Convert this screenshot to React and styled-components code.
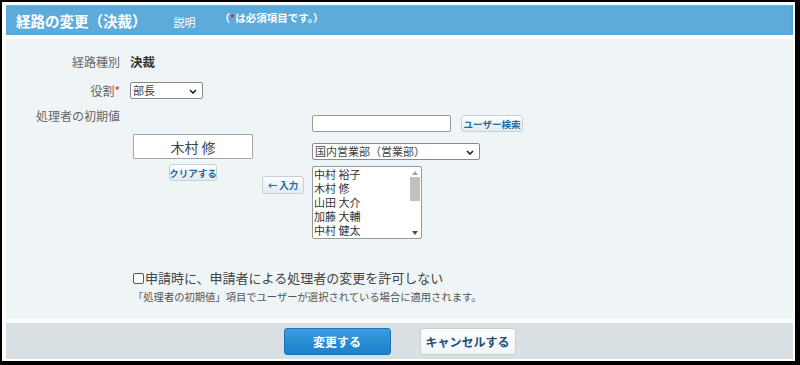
import React from 'react';
import styled, { createGlobalStyle } from 'styled-components';

const GlobalStyle = createGlobalStyle`
  html, body {
    margin: 0;
    padding: 0;
    background: #fff;
    font-family: "Noto Sans CJK JP", "Noto Sans", sans-serif;
  }
`;

const Frame = styled.div`
  box-sizing: border-box;
  width: 800px;
  height: 365px;
  border-style: solid;
  border-color: #000;
  border-width: 2px 5px 4px 2px;
  padding: 3px 2px 2px 4px;
  background: #fff;
  display: flex;
  flex-direction: column;
  gap: 4px;
`;

const Header = styled.div`
  height: 30px;
  box-sizing: border-box;
  background: #5dabdb;
  border-top: 1px solid #6db4e0;
  border-right: 2px solid #52a2d6;
  display: flex;
  align-items: center;
  padding-left: 10px;
  color: #fff;
`;

const Title = styled.h1`
  margin: 2px 0 0;
  font-size: 14.5px;
  font-weight: bold;
  line-height: 1;
`;

const HelpLink = styled.span`
  font-size: 11px;
  margin-left: 27px;
  margin-top: 2px;
`;

const Required = styled.span`
  font-size: 10.5px;
  font-weight: bold;
  margin-left: 24px;
  margin-top: -6px;
`;

const Star = styled.span`
  color: #e8231f;
`;

const Body = styled.div`
  flex: 1;
  background: #eff4f7;
  padding-top: 15px;
  display: flex;
  flex-direction: column;
`;

const Row = styled.div`
  display: flex;
  align-items: ${(p) => (p.$top ? 'flex-start' : 'center')};
  gap: 10px;
  margin-top: ${(p) => p.$mt || 0}px;
  min-height: 16px;
  line-height: 16px;
`;

const Label = styled.div`
  width: 114px;
  text-align: right;
  font-size: 12px;
  line-height: 14px;
  color: #666;
  flex-shrink: 0;
`;

const Value = styled.div`
  font-size: 12.5px;
  line-height: 16px;
  font-weight: bold;
  color: #333;
`;

const SelectWrap = styled.div`
  position: relative;
  width: ${(p) => p.$w}px;
  margin-top: ${(p) => p.$mt || 0}px;
`;

const Select = styled.select`
  appearance: none;
  box-sizing: border-box;
  display: block;
  width: 100%;
  height: ${(p) => p.$h || 17}px;
  font-family: inherit;
  font-size: 11px;
  line-height: 15px;
  color: #444;
  border: 1px solid #8a8a8a;
  border-radius: 2px;
  background: #fff;
  padding: 0 0 0 2px;
  margin: 0;
`;

const Chevron = styled.svg`
  position: absolute;
  right: 6px;
  top: 50%;
  margin-top: -2px;
  pointer-events: none;
`;

const Picker = styled.div`
  display: flex;
  align-items: flex-start;
  margin-top: 6px;
  margin-left: 3px;
`;

const LeftCol = styled.div`
  display: flex;
  flex-direction: column;
  align-items: center;
  gap: 5px;
  padding-top: 19px;
`;

const NameBox = styled.div`
  box-sizing: border-box;
  width: 120px;
  height: 25px;
  background: #fff;
  border: 1px solid #a5a5a5;
  border-radius: 1px;
  display: flex;
  align-items: center;
  justify-content: center;
  font-size: 14px;
  color: #444;
`;

const SmallButton = styled.button`
  box-sizing: border-box;
  width: ${(p) => p.$w}px;
  height: ${(p) => p.$h || 17}px;
  padding: 0;
  margin: 0;
  font-family: inherit;
  font-size: 9.5px;
  font-weight: bold;
  white-space: nowrap;
  color: #1e6aa6;
  background: linear-gradient(#fdfefe, #e5ebef);
  border: 1px solid #c7d0d6;
  border-radius: 3px;
  display: flex;
  align-items: center;
  justify-content: center;
  gap: 3px;
`;

const MidCol = styled.div`
  padding-top: 61px;
  margin-left: 9px;
`;

const RightCol = styled.div`
  display: flex;
  flex-direction: column;
  margin-left: 8px;
`;

const SearchRow = styled.div`
  display: flex;
  align-items: center;
  gap: 10px;
`;

const TextInput = styled.input`
  box-sizing: border-box;
  width: 139px;
  height: 17px;
  margin: 0;
  border: 1px solid #999;
  border-radius: 2px;
  background: #fff;
`;

const ListBox = styled.div`
  box-sizing: border-box;
  width: 110px;
  height: 73px;
  margin-top: 6px;
  background: #fff;
  border: 1px solid #999;
  border-radius: 2px;
  display: flex;
  overflow: hidden;
`;

const Items = styled.ul`
  flex: 1;
  margin: 0;
  padding: 0 0 0 1px;
  list-style: none;
`;

const Item = styled.li`
  font-size: 11px;
  line-height: 14px;
  color: #333;
  white-space: nowrap;
`;

const ScrollBar = styled.div`
  width: 12px;
  display: flex;
  flex-direction: column;
  align-items: center;
  justify-content: space-between;
  padding: 4px 0 3px;
  box-sizing: border-box;
`;

const Thumb = styled.div`
  width: 10px;
  height: 24px;
  background: #c1c1c1;
  margin-top: 2px;
  margin-bottom: auto;
`;

const Arrow = styled.div`
  width: 0;
  height: 0;
  border-left: 3px solid transparent;
  border-right: 3px solid transparent;
  ${(p) =>
    p.$down
      ? 'border-top: 4px solid #505050;'
      : 'border-bottom: 4px solid #a3a3a3;'}
`;

const CheckLine = styled.label`
  display: flex;
  align-items: center;
  margin-left: 127px;
  margin-top: 31px;
  font-size: 13px;
  line-height: 16px;
  color: #444;
`;

const Box = styled.input`
  appearance: none;
  box-sizing: border-box;
  width: 11px;
  height: 11px;
  margin: 0 1px 0 0;
  border: 1px solid #555;
  border-radius: 2px;
  background: #fff;
`;

const Note = styled.div`
  margin-left: 127px;
  margin-top: 5px;
  font-size: 10.3px;
  line-height: 12px;
  color: #555;
`;

const Footer = styled.div`
  height: 36px;
  background: #d9e0e3;
  display: flex;
  justify-content: center;
  align-items: flex-start;
  padding-top: 5px;
  box-sizing: border-box;
  gap: 29px;
`;

const MainButton = styled.button`
  box-sizing: border-box;
  width: ${(p) => p.$w}px;
  height: 27px;
  margin: 0;
  padding: 0;
  font-family: inherit;
  font-size: 12px;
  font-weight: bold;
  border-radius: 3px;
  color: ${(p) => (p.$primary ? '#fff' : '#24507c')};
  background: ${(p) =>
    p.$primary
      ? 'linear-gradient(#3a9de0, #1b7fcb)'
      : 'linear-gradient(#ffffff, #f1f3f4)'};
  border: 1px solid ${(p) => (p.$primary ? '#1d72b8' : '#c9cfd3')};
`;

const members = ['中村 裕子', '木村 修', '山田 大介', '加藤 大輔', '中村 健太'];

const DropDown = ({ width, mt, options }) => (
  <SelectWrap $w={width} $mt={mt}>
    <Select defaultValue={options[0]}>
      {options.map((o) => (
        <option key={o}>{o}</option>
      ))}
    </Select>
    <Chevron width="8" height="5" viewBox="0 0 8 5">
      <path d="M1 1 L4 4 L7 1" fill="none" stroke="#222" strokeWidth="1.6" />
    </Chevron>
  </SelectWrap>
);

const App = () => {
  return (
    <>
      <GlobalStyle />
      <Frame>
        <Header>
          <Title>経路の変更（決裁）</Title>
          <HelpLink>説明</HelpLink>
          <Required>
            （<Star>*</Star>は必須項目です。）
          </Required>
        </Header>

        <Body>
          <Row>
            <Label>経路種別</Label>
            <Value>決裁</Value>
          </Row>

          <Row $mt={12}>
            <Label>
              役割<Star>*</Star>
            </Label>
            <DropDown width={73} options={['部長', '課長']} />
          </Row>

          <Row $top $mt={10}>
            <Label>処理者の初期値</Label>
            <Picker>
              <LeftCol>
                <NameBox>木村 修</NameBox>
                <SmallButton $w={48}>クリアする</SmallButton>
              </LeftCol>
              <MidCol>
                <SmallButton $w={42} $h={18}>← 入力</SmallButton>
              </MidCol>
              <RightCol>
                <SearchRow>
                  <TextInput type="text" />
                  <SmallButton $w={62}>ユーザー検索</SmallButton>
                </SearchRow>
                <DropDown width={168} mt={11} options={['国内営業部（営業部）']} />
                <ListBox>
                  <Items>
                    {members.map((m) => (
                      <Item key={m}>{m}</Item>
                    ))}
                  </Items>
                  <ScrollBar>
                    <Arrow />
                    <Thumb />
                    <Arrow $down />
                  </ScrollBar>
                </ListBox>
              </RightCol>
            </Picker>
          </Row>

          <CheckLine>
            <Box type="checkbox" />
            申請時に、申請者による処理者の変更を許可しない
          </CheckLine>
          <Note>「処理者の初期値」項目でユーザーが選択されている場合に適用されます。</Note>
        </Body>

        <Footer>
          <MainButton $primary $w={107}>変更する</MainButton>
          <MainButton $w={96}>キャンセルする</MainButton>
        </Footer>
      </Frame>
    </>
  );
};

export default App;
